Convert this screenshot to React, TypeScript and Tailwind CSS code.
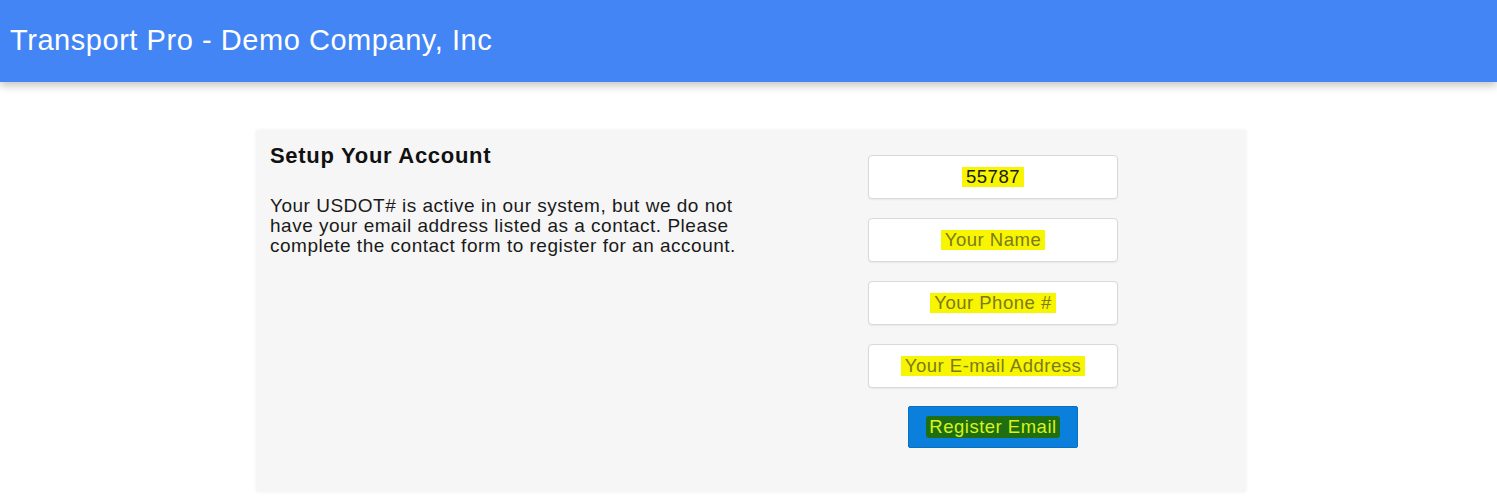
import React from "react";

// ─── Form fields ──────────────────────────────────────────────────────────────

const FIELDS = [
  { id: "dot", text: "55787", filled: true },
  { id: "name", text: "Your Name", filled: false },
  { id: "phone", text: "Your Phone #", filled: false },
  { id: "email", text: "Your E-mail Address", filled: false },
];

function Field({ text, filled }: { text: string; filled: boolean }) {
  return (
    <div className="w-[250px] h-[44px] bg-white border border-[#d9d9d9] rounded-[4px] shadow-[0_1px_2px_rgba(0,0,0,0.06)] flex items-center justify-center">
      <span
        className={`bg-[#f7f500] px-[4px] text-[18.5px] tracking-[0.5px] leading-[20px] ${
          filled ? "text-[#1a1a1a]" : "text-[#7c7a1e]"
        }`}
      >
        {text}
      </span>
    </div>
  );
}

// ─── Page ─────────────────────────────────────────────────────────────────────

export default function App() {
  return (
    <div
      className="min-h-[496px] bg-white"
      style={{ fontFamily: "'Liberation Sans', Arial, sans-serif" }}
    >
      <header className="h-[82px] bg-[#4385f4] flex items-center px-[10px] shadow-[0_4px_8px_rgba(0,0,0,0.22)] relative z-10">
        <h1 className="text-[29px] text-white font-normal tracking-[0.55px]">
          Transport Pro - Demo Company, Inc
        </h1>
      </header>

      <main className="pt-[48px] flex justify-center pl-[5px]">
        <section className="w-[990px] h-[362px] bg-[#f6f6f6] rounded-[2px] shadow-[0_0_4px_rgba(0,0,0,0.06)] flex">
          <div className="w-[612px] pl-[14px] pt-[13px]">
            <h2 className="text-[22px] font-bold text-[#111] leading-[26px] tracking-[0.7px]">
              Setup Your Account
            </h2>
            <p className="mt-[27px] w-[482px] text-[19px] leading-[20px] tracking-[0.5px] text-[#1a1a1a]">
              Your USDOT# is active in our system, but we do not have your email
              address listed as a contact. Please complete the contact form to
              register for an account.
            </p>
          </div>

          <div className="pt-[25px] flex flex-col items-center w-[250px]">
            <div className="flex flex-col gap-[19px]">
              {FIELDS.map((f) => (
                <Field key={f.id} text={f.text} filled={f.filled} />
              ))}
            </div>
            <button className="mt-[18px] w-[170px] h-[42px] bg-[#0b7fdc] border border-[#0a6fc0] rounded-[2px] flex items-center justify-center">
              <span className="bg-[#1f6e12] px-[3px] rounded-[3px] text-[18.5px] tracking-[0.5px] leading-[22px] text-[#d9f21a]">
                Register Email
              </span>
            </button>
          </div>
        </section>
      </main>
    </div>
  );
}
